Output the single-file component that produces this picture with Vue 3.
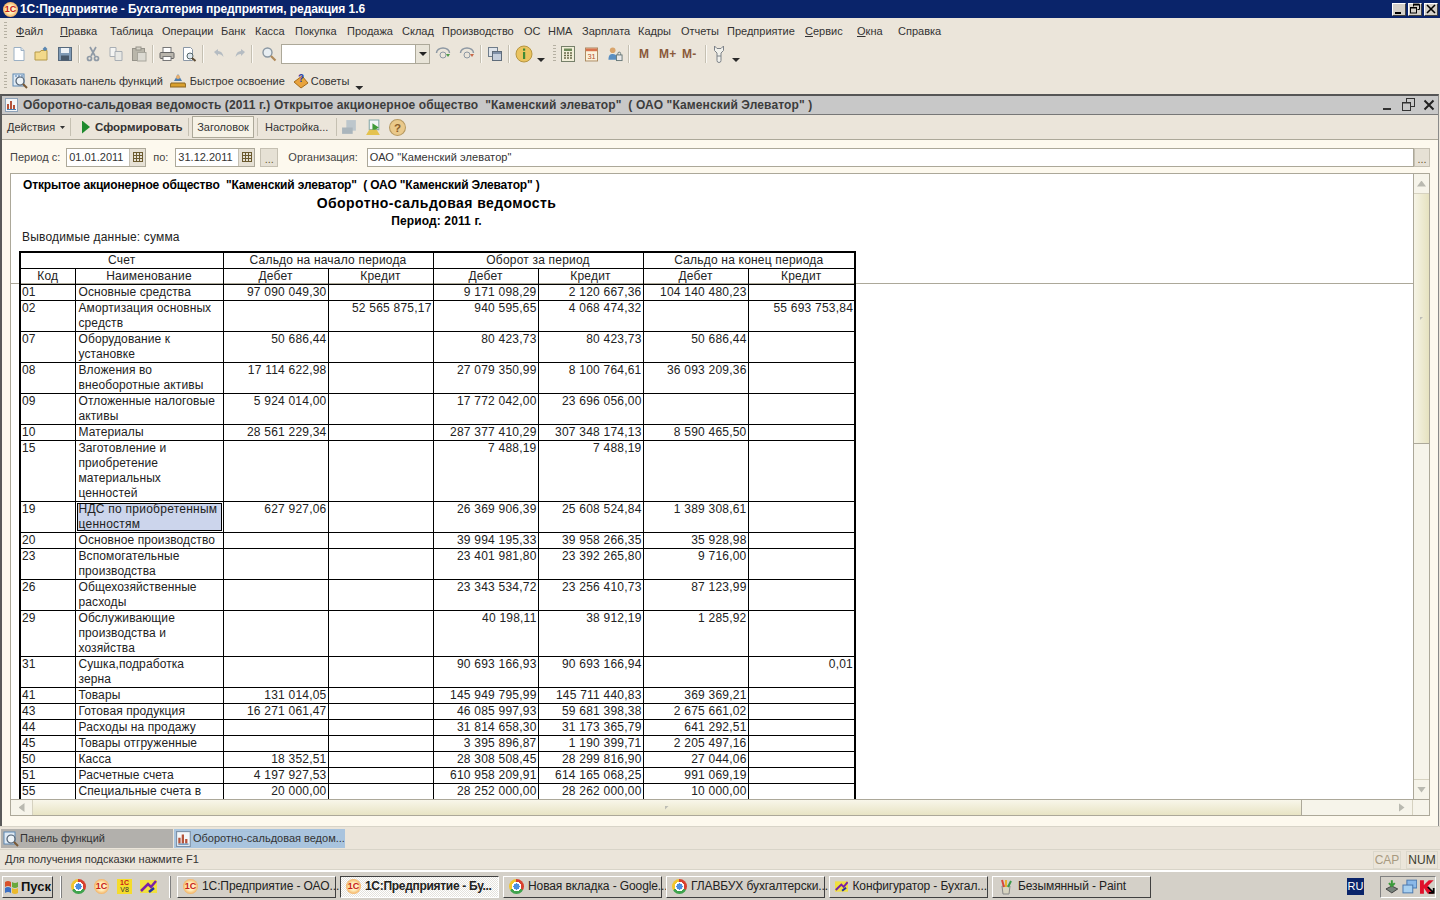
<template>
  <div class="app">
    <!-- заголовок приложения -->
    <div class="titlebar">
      <span class="one-c">1С</span>
      <span class="title-text">1С:Предприятие - Бухгалтерия предприятия, редакция 1.6</span>
      <div class="win-btns">
        <button class="win-btn"><svg width="12" height="12"><rect x="2" y="9" width="6" height="2" fill="#000"/></svg></button>
        <button class="win-btn"><svg width="12" height="12" fill="none" stroke="#000"><path d="M4.5 3.5V1.500h6v5h-2"/><path d="M4 1.500h6.500" stroke-width="2"/><rect x="1.500" y="4.500" width="6" height="5.500"/><path d="M1 5h7"/></svg></button>
        <button class="win-btn"><svg width="12" height="12" stroke="#000" stroke-width="1.600"><path d="M2 2l8 8M10 2l-8 8"/></svg></button>
      </div>
    </div>

    <!-- главное меню -->
    <div class="menubar">
      <span class="grip"></span>
      <div class="menu-items">
        <span v-for="m in menu" :key="m.name" class="menu-item" :style="{ width: m.w + 'px' }"><u>{{ m.name[0] }}</u>{{ m.name.slice(1) }}</span>
      </div>
    </div>

    <!-- панель 1 -->
    <div class="toolbar tb1">
      <span class="grip"></span>
      <svg class="ic first" viewBox="0 0 16 16"><path d="M3 1.500h7l3 3v10H3z" fill="#fff" stroke="#9bb0c4"/><path d="M10 1.500v3h3" fill="#dde6ee" stroke="#9bb0c4"/></svg>
      <svg class="ic" viewBox="0 0 16 16"><path d="M1 6h5l1-1.500h6V14H1z" fill="#f3d98a" stroke="#b59a4a"/><path d="M11 5V1.500M9 3.500l2-2 2 2" fill="none" stroke="#5a86b0" stroke-width="1.300"/></svg>
      <svg class="ic" viewBox="0 0 16 16"><rect x="1.500" y="1.500" width="13" height="13" fill="#7f9ab5" stroke="#56697c"/><rect x="4" y="2" width="8" height="5" fill="#eef2f5"/><rect x="4" y="9.500" width="8" height="5" fill="#48596a"/></svg>
      <span class="sep"></span>
      <svg class="ic" viewBox="0 0 16 16" stroke="#8f9aa6" fill="none" stroke-width="1.700"><path d="M5 1l5 9M11 1L6 10"/><circle cx="4.500" cy="12.500" r="2"/><circle cx="11.500" cy="12.500" r="2"/></svg>
      <svg class="ic" viewBox="0 0 16 16"><path d="M2 1.500h6v9H2z" fill="#f4f4f2" stroke="#a8aeb4"/><path d="M7 5.500h7v9H7z" fill="#e8e8e4" stroke="#a8aeb4"/></svg>
      <svg class="ic" viewBox="0 0 16 16"><rect x="1.500" y="2.500" width="12" height="12" fill="#b9b6aa" stroke="#96938a"/><rect x="5" y="1" width="5" height="3" fill="#d6d3c8" stroke="#96938a"/><rect x="6.500" y="6.500" width="8.500" height="8.500" fill="#dcdad2" stroke="#a8a69c"/></svg>
      <span class="sep"></span>
      <svg class="ic" viewBox="0 0 16 16"><rect x="4" y="1.500" width="8" height="5" fill="#fff" stroke="#777"/><rect x="1" y="6.500" width="14" height="6" rx="1" fill="#b9b5ac" stroke="#666"/><rect x="4" y="10.500" width="8" height="4" fill="#fff" stroke="#777"/></svg>
      <svg class="ic g6" viewBox="0 0 16 16"><path d="M2.500 1.500h7l2 2v11h-9z" fill="#fff" stroke="#8a97a6"/><circle cx="9" cy="10" r="3" fill="#dfe8f0" stroke="#566"/><path d="M11 12l3.500 3" stroke="#5c4a32" stroke-width="2"/></svg>
      <span class="sep"></span>
      <svg class="ic s12 undo" viewBox="0 0 12 12"><path d="M1 4l4-3v2c3 0 5 2 5.500 6-1.500-2-3-3-5.500-3v2z" fill="#b5bcc2"/></svg>
      <svg class="ic s12 redo" viewBox="0 0 12 12"><path d="M11 4L7 1v2C4 3 2 5 1.500 9 3 7 4.500 6 7 6v2z" fill="#b5bcc2"/></svg>
      <span class="sep"></span>
      <svg class="ic search" viewBox="0 0 16 16"><circle cx="6.500" cy="6.500" r="4.500" fill="#e8eef2" stroke="#8a97a2" stroke-width="1.400"/><path d="M10 10l4.500 4.500" stroke="#b08a5a" stroke-width="2.200"/></svg>
      <div class="combo"><span class="combo-input"></span><span class="combo-btn"><i class="arrow"></i></span></div>
      <svg class="ic" viewBox="0 0 16 16" fill="none"><path d="M1.500 7a6.500 5 0 0 1 13 0" stroke="#8d98a3" stroke-width="1.500"/><circle cx="8" cy="9" r="3" stroke="#8d98a3"/><path d="M11 8l2 3 2-3" fill="#4f9a4a"/></svg>
      <svg class="ic g8" viewBox="0 0 16 16" fill="none"><path d="M1.500 7a6.500 5 0 0 1 13 0" stroke="#8d98a3" stroke-width="1.500"/><circle cx="8" cy="9" r="3" stroke="#8d98a3"/><path d="M11 8l2 3 2-3" fill="#c76a4a"/></svg>
      <span class="sep"></span>
      <svg class="ic" viewBox="0 0 16 16"><rect x="1.500" y="1.500" width="9" height="9" fill="#dfe4ea" stroke="#6f7c8a"/><rect x="5.500" y="5.500" width="9" height="9" fill="#c6cfdc" stroke="#5f6c7a"/><rect x="6" y="6" width="8" height="2" fill="#7f90a8"/></svg>
      <span class="sep"></span>
      <svg class="ic s18" viewBox="0 0 18 18"><circle cx="9" cy="9" r="8" fill="#eac35e" stroke="#b79640"/><rect x="8" y="3.500" width="2.200" height="2.200" fill="#3e8a35"/><rect x="8" y="7" width="2.200" height="7" fill="#3e8a35"/></svg>
      <i class="drop"></i>
      <span class="grip g2"></span>
      <svg class="ic s14" viewBox="0 0 14 16"><rect x="0.500" y="0.500" width="13" height="15" fill="#f1eed8" stroke="#76806a"/><rect x="3" y="2.500" width="8" height="2.500" fill="#6e8a5a"/><path d="M3 7h2M6 7h2M9 7h2M3 9.500h2M6 9.500h2M9 9.500h2M3 12h2M6 12h2M9 12h2" stroke="#6b6b4a" stroke-width="1.300"/></svg>
      <svg class="ic cal" viewBox="0 0 14 16"><rect x="0.500" y="1.500" width="13" height="14" fill="#fbf2dc" stroke="#a8865c"/><rect x="1" y="2" width="12" height="3" fill="#d8744e"/><text x="7" y="13.500" text-anchor="middle" font-size="8" fill="#b5502e" font-family="Liberation Sans">31</text></svg>
      <svg class="ic s15" viewBox="0 0 16 16"><circle cx="5" cy="4" r="3" fill="#d9a56c"/><path d="M0.500 14c0-5 2-6 4.500-6s4 1 4 3v3z" fill="#5a8fc2"/><rect x="9" y="9" width="6" height="6" fill="#e8e8e8" stroke="#677"/><path d="M10.500 9V7.500a1.500 1.500 0 0 1 3 0V9" fill="none" stroke="#677"/></svg>
      <span class="sep"></span>
      <b class="mem m1">M</b>
      <b class="mem m2">M+</b>
      <b class="mem m3">M-</b>
      <span class="sep s-mem"></span>
      <svg class="ic wrench" viewBox="0 0 12 18" fill="#f1f1ec" stroke="#7d8288"><path d="M1.500 1v4.500L4 8v7.500a2 2 0 0 0 4 0V8l2.500-2.500V1L8 3.500H4z"/><path d="M4 11h4"/></svg>
      <i class="drop drop-last"></i>
    </div>

    <!-- панель 2 -->
    <div class="toolbar tb2">
      <span class="grip"></span>
      <svg class="ic first2" viewBox="0 0 16 16"><rect x="1" y="1" width="11" height="12" fill="#dfeaf4" stroke="#5f8ab4"/><path d="M3 3h2M6 3h2M9 3h2" stroke="#4a76a8"/><circle cx="8" cy="8" r="4" fill="#eef4f8" stroke="#4f5f70" stroke-width="1.200"/><path d="M11 11l4 4" stroke="#7a5a36" stroke-width="2"/></svg>
      <span class="tb-label">Показать панель функций</span>
      <svg class="ic t2" viewBox="0 0 16 16"><path d="M8 1l4 7H4z" fill="#4f7fb0"/><circle cx="8" cy="4" r="2" fill="#e8b070"/><path d="M1 10h14l1 4H0z" fill="#d9a02e" stroke="#8a6420"/></svg>
      <span class="tb-label">Быстрое освоение</span>
      <svg class="ic t3" viewBox="0 0 16 16"><path d="M1 9l8-6 6 7-7 5z" fill="#e8a33d" stroke="#a56c1c"/><text x="8" y="9" text-anchor="middle" font-size="10" font-weight="700" fill="#2a3fa8" font-family="Liberation Sans">?</text></svg>
      <span class="tb-label">Советы</span>
      <i class="drop d3"></i>
    </div>

    <!-- окно отчета -->
    <div class="doc">
      <div class="doc-title">
        <svg class="doc-ic" width="14" height="14" viewBox="0 0 14 14"><rect x="0.500" y="0.500" width="12" height="13" fill="#f4f6f8" stroke="#8fa3b8"/><path d="M3 11V6M6 11V3M9 11V7" stroke-width="2" stroke="#b5533a"/><path d="M2 11.500h9" stroke="#4a7db0"/></svg>
        <span class="doc-title-text">{{ docTitle }}</span>
        <div class="doc-btns">
          <svg width="14" height="14"><rect x="2" y="10" width="8" height="2" fill="#333"/></svg>
          <svg width="14" height="14" fill="none" stroke="#333"><rect x="4.500" y="0.500" width="8" height="8"/><rect x="0.500" y="4.500" width="8" height="8" fill="#c8c8c8"/><path d="M1 5h7"/></svg>
          <svg width="12" height="12" stroke="#222" stroke-width="2"><path d="M1.500 1.500l9 9M10.500 1.500l-9 9"/></svg>
        </div>
      </div>

      <div class="doc-toolbar">
        <span class="dt-act">Действия</span><i class="mini-arrow"></i>
        <span class="dt-sep"></span>
        <i class="play"></i>
        <b class="dt-run">Сформировать</b>
        <span class="dt-sep"></span>
        <span class="dt-pressed">Заголовок</span>
        <span class="dt-sep"></span>
        <span class="dt-set">Настройка...</span>
        <span class="dt-sep"></span>
        <svg class="dt-ic dt-first" viewBox="0 0 16 16"><path d="M5 1h9v10H5z" fill="#bcc6cc"/><path d="M1 8h10v6H1z" fill="#aab5bc"/></svg>
        <svg class="dt-ic" viewBox="0 0 16 16"><path d="M4 1h9v9H4z" fill="#f2f4f6" stroke="#8aa"/><path d="M7 4l6 4-6 4z" fill="#3f9a3a"/><path d="M1 15l3-5h7l3 5z" fill="#e4c24e"/></svg>
        <svg class="dt-ic" viewBox="0 0 16 16"><circle cx="8" cy="8" r="7.500" fill="#eac98a" stroke="#b79a62"/><text x="8" y="12" text-anchor="middle" font-size="11" font-weight="700" fill="#8a5f2a" font-family="Liberation Sans">?</text></svg>
      </div>

      <div class="filter">
        <label>Период с:</label>
        <div class="date date-from"><span>01.01.2011</span><i class="cal-btn"><svg width="10" height="10" viewBox="0 0 10 10"><path d="M0 .5h10M0 3.500h10M0 6.500h10M0 9.500h10M.5 0v10M3.500 0v10M6.500 0v10M9.500 0v10" stroke="#6b5a2e"/></svg></i></div>
        <label class="lbl-to">по:</label>
        <div class="date date-to"><span>31.12.2011</span><i class="cal-btn"><svg width="10" height="10" viewBox="0 0 10 10"><path d="M0 .5h10M0 3.500h10M0 6.500h10M0 9.500h10M.5 0v10M3.500 0v10M6.500 0v10M9.500 0v10" stroke="#6b5a2e"/></svg></i></div>
        <span class="dots-btn">...</span>
        <label class="lbl-org">Организация:</label>
        <div class="org"><span>ОАО "Каменский элеватор"</span></div>
        <span class="dots-btn org-btn">...</span>
      </div>

      <div class="report">
        <div class="report-main">
          <div class="sheet">
            <div class="freeze-line"></div>
            <div class="h-org">{{ orgTitle }}</div>
            <div class="h-title">Оборотно-сальдовая ведомость</div>
            <div class="h-period">Период: 2011 г.</div>
            <div class="h-note">Выводимые данные: сумма</div>
            <table class="osv">
              <colgroup><col v-for="(w, i) in cols" :key="i" :style="{ width: w + 'px' }" /></colgroup>
              <thead>
                <tr>
                  <th colspan="2">Счет</th>
                  <th colspan="2">Сальдо на начало периода</th>
                  <th colspan="2">Оборот за период</th>
                  <th colspan="2">Сальдо на конец периода</th>
                </tr>
                <tr>
                  <th>Код</th><th>Наименование</th>
                  <th>Дебет</th><th>Кредит</th>
                  <th>Дебет</th><th>Кредит</th>
                  <th>Дебет</th><th>Кредит</th>
                </tr>
              </thead>
              <tbody>
                <tr v-for="r in rows" :key="r[0]">
                  <td class="code">{{ r[0] }}</td>
                  <td class="name" :class="{ selected: r[0] === '19' }">{{ r[1] }}</td>
                  <td v-for="(v, i) in r.slice(2)" :key="i" class="num">{{ v }}</td>
                </tr>
              </tbody>
            </table>
          </div>
          <div class="vscroll">
            <span class="sb-btn v"><i class="tri up"></i></span>
            <span class="v-thumb"><i class="dot"></i></span>
            <span class="v-rest"></span>
            <span class="sb-btn v"><i class="tri down"></i></span>
          </div>
        </div>
        <div class="hscroll">
          <span class="sb-btn h"><i class="tri left"></i></span>
          <span class="h-thumb"><i class="dot"></i></span>
          <span class="h-rest"></span>
          <span class="sb-btn h"><i class="tri right"></i></span>
          <span class="corner"></span>
        </div>
      </div>
    </div>

    <!-- вкладки окон -->
    <div class="tabs">
      <div class="tab">
        <svg class="ic" viewBox="0 0 16 16"><rect x="1" y="1" width="11" height="12" fill="#dfeaf4" stroke="#5f8ab4"/><circle cx="8" cy="8" r="4" fill="#eef4f8" stroke="#4f5f70" stroke-width="1.200"/><path d="M11 11l4 4" stroke="#7a5a36" stroke-width="2"/></svg>
        <span>Панель функций</span>
      </div>
      <div class="tab active">
        <svg class="ic" viewBox="0 0 14 14"><rect x="0.500" y="0.500" width="12" height="13" fill="#f4f6f8" stroke="#7f93a8"/><path d="M3 11V6M6 11V3M9 11V7" stroke-width="2" stroke="#b5533a"/><path d="M2 11.500h9" stroke="#4a7db0"/></svg>
        <span>Оборотно-сальдовая ведом...</span>
      </div>
    </div>

    <!-- строка состояния -->
    <div class="status">
      <span class="status-text">Для получения подсказки нажмите F1</span>
      <span class="ind cap">CAP</span>
      <span class="ind num-ind">NUM</span>
    </div>

    <!-- панель задач -->
    <div class="taskbar">
      <button class="start">
        <svg width="15" height="15" viewBox="0 0 15 15"><path d="M1 3q3-2 6 0v5q-3-2-6 0z" fill="#d8512a"/><path d="M8 3q3 2 6 0v5q-3 2-6 0z" fill="#6aa83c"/><path d="M1 9q3-2 6 0v5q-3-2-6 0z" fill="#3b6fc4"/><path d="M8 9q3 2 6 0v5q-3 2-6 0z" fill="#eab92c"/></svg>
        <b>Пуск</b>
      </button>
      <span class="task-grip"></span>
      <div class="quick">
        <i class="chrome"></i>
        <span class="one-c">1С</span>
        <span class="v8">1С<em>V8</em></span>
        <svg width="17" height="15" viewBox="0 0 17 15"><rect y="1" width="17" height="13" fill="#f0e040"/><path d="M1 12L8 5l3 3 5-6" stroke="#7a1fa8" stroke-width="2.500" fill="none"/><path d="M9 13l5-4" stroke="#1f2fa8" stroke-width="2.500"/></svg>
      </div>
      <span class="task-grip"></span>
      <div class="tasks">
        <button class="task"><span class="one-c">1С</span><span class="task-text">1С:Предприятие - ОАО...</span></button>
        <button class="task on"><span class="one-c">1С</span><span class="task-text">1С:Предприятие - Бу...</span></button>
        <button class="task"><i class="chrome"></i><span class="task-text">Новая вкладка - Google...</span></button>
        <button class="task"><i class="chrome"></i><span class="task-text">ГЛАВБУХ бухгалтерски...</span></button>
        <button class="task"><svg width="17" height="15" viewBox="0 0 17 15"><rect y="1" width="17" height="13" fill="#f0e040"/><path d="M1 12L8 5l3 3 5-6" stroke="#7a1fa8" stroke-width="2.500" fill="none"/><path d="M9 13l5-4" stroke="#1f2fa8" stroke-width="2.500"/></svg><span class="task-text">Конфигуратор - Бухгал...</span></button>
        <button class="task"><svg width="16" height="16" viewBox="0 0 16 16"><path d="M4 7h8l-1 8H5z" fill="#d8d4c0" stroke="#888"/><path d="M6 8L4 1" stroke="#d8483a" stroke-width="2"/><path d="M8 8V1" stroke="#e8b030" stroke-width="2"/><path d="M10 8l3-6" stroke="#3a9a4a" stroke-width="2"/></svg><span class="task-text">Безымянный - Paint</span></button>
      </div>
      <span class="lang">RU</span>
      <div class="tray">
        <svg width="16" height="16" viewBox="0 0 16 16"><path d="M2 10l6-3 6 3-6 4z" fill="#77827a" stroke="#444"/><path d="M8 1v6M5 4l3 3 3-3" stroke="#3a9a3a" stroke-width="2" fill="none"/></svg>
        <svg width="16" height="16" viewBox="0 0 16 16"><rect x="5" y="1" width="10" height="8" fill="#8ab8e8" stroke="#4a78b0"/><rect x="1" y="6" width="10" height="8" fill="#a8d0f0" stroke="#4a78b0"/></svg>
        <svg width="16" height="16" viewBox="0 0 16 16"><path d="M1 1h4v5l5-5h5l-6 6 6 8H9L5 9v6H1z" fill="#e0102a"/><path d="M9 8l6 6M10 14h5V9" stroke="#000" stroke-width="1.800" fill="none"/></svg>
      </div>
    </div>
  </div>
</template>

<script setup>
// двойные пробелы как в оригинале, поэтому строки вынесены сюда
const orgTitle = 'Открытое акционерное общество  "Каменский элеватор"  ( ОАО "Каменский Элеватор" )'
const docTitle = 'Оборотно-сальдовая ведомость (2011 г.) ' + orgTitle

// ширины пунктов меню подобраны по скриншоту
const menu = [
  { name: 'Файл', w: 44 }, { name: 'Правка', w: 50 }, { name: 'Таблица', w: 52 },
  { name: 'Операции', w: 59 }, { name: 'Банк', w: 34 }, { name: 'Касса', w: 40 },
  { name: 'Покупка', w: 52 }, { name: 'Продажа', w: 55 }, { name: 'Склад', w: 40 },
  { name: 'Производство', w: 82 }, { name: 'ОС', w: 24 }, { name: 'НМА', w: 34 },
  { name: 'Зарплата', w: 56 }, { name: 'Кадры', w: 43 }, { name: 'Отчеты', w: 46 },
  { name: 'Предприятие', w: 78 }, { name: 'Сервис', w: 52 }, { name: 'Окна', w: 41 },
  { name: 'Справка', w: 50 }
]

const cols = [55, 148, 105, 105, 105, 105, 105, 107]

const rows = [
  ['01', 'Основные средства', '97 090 049,30', '', '9 171 098,29', '2 120 667,36', '104 140 480,23', ''],
  ['02', 'Амортизация основных\nсредств', '', '52 565 875,17', '940 595,65', '4 068 474,32', '', '55 693 753,84'],
  ['07', 'Оборудование к\nустановке', '50 686,44', '', '80 423,73', '80 423,73', '50 686,44', ''],
  ['08', 'Вложения во\nвнеоборотные активы', '17 114 622,98', '', '27 079 350,99', '8 100 764,61', '36 093 209,36', ''],
  ['09', 'Отложенные налоговые\nактивы', '5 924 014,00', '', '17 772 042,00', '23 696 056,00', '', ''],
  ['10', 'Материалы', '28 561 229,34', '', '287 377 410,29', '307 348 174,13', '8 590 465,50', ''],
  ['15', 'Заготовление и\nприобретение\nматериальных\nценностей', '', '', '7 488,19', '7 488,19', '', ''],
  ['19', 'НДС по приобретенным\nценностям', '627 927,06', '', '26 369 906,39', '25 608 524,84', '1 389 308,61', ''],
  ['20', 'Основное производство', '', '', '39 994 195,33', '39 958 266,35', '35 928,98', ''],
  ['23', 'Вспомогательные\nпроизводства', '', '', '23 401 981,80', '23 392 265,80', '9 716,00', ''],
  ['26', 'Общехозяйственные\nрасходы', '', '', '23 343 534,72', '23 256 410,73', '87 123,99', ''],
  ['29', 'Обслуживающие\nпроизводства и\nхозяйства', '', '', '40 198,11', '38 912,19', '1 285,92', ''],
  ['31', 'Сушка,подработка\nзерна', '', '', '90 693 166,93', '90 693 166,94', '', '0,01'],
  ['41', 'Товары', '131 014,05', '', '145 949 795,99', '145 711 440,83', '369 369,21', ''],
  ['43', 'Готовая продукция', '16 271 061,47', '', '46 085 997,93', '59 681 398,38', '2 675 661,02', ''],
  ['44', 'Расходы на продажу', '', '', '31 814 658,30', '31 173 365,79', '641 292,51', ''],
  ['45', 'Товары отгруженные', '', '', '3 395 896,87', '1 190 399,71', '2 205 497,16', ''],
  ['50', 'Касса', '18 352,51', '', '28 308 508,45', '28 299 816,90', '27 044,06', ''],
  ['51', 'Расчетные счета', '4 197 927,53', '', '610 958 209,91', '614 165 068,25', '991 069,19', ''],
  ['55', 'Специальные счета в', '20 000,00', '', '28 252 000,00', '28 262 000,00', '10 000,00', '']
]
</script>

<style>
html, body {
  margin: 0;
  overflow: hidden;
}
</style>

<style scoped>
.app {
  width: 1440px;
  height: 900px;
  display: flex;
  flex-direction: column;
  overflow: hidden;
  background: #ebe5da;
  color: #2a2a2a;
  font: 11px/15px "Liberation Sans", Arial, sans-serif;
}

button {
  font: inherit;
  color: inherit;
  padding: 0;
}

i {
  display: block;
  font-style: normal;
}

.one-c {
  width: 15px;
  height: 15px;
  flex: none;
  border-radius: 50%;
  background: radial-gradient(circle, #fff0c0 35%, #ee9030 90%);
  color: #c8201a;
  font: 700 9px/15px "Liberation Sans", sans-serif;
  letter-spacing: 0;
  text-align: center;
}

.titlebar {
  height: 18px;
  flex: none;
  display: flex;
  align-items: center;
  padding-left: 3px;
  background: #0a246a;
}
.title-text {
  margin-left: 2px;
  color: #fff;
  font-weight: 700;
  font-size: 12px;
  letter-spacing: -0.07px;
}
.win-btns {
  margin-left: auto;
  margin-right: 2px;
  display: flex;
  gap: 2px;
}
.win-btn {
  width: 14px;
  height: 13px;
  display: flex;
  align-items: center;
  justify-content: center;
  background: #d4d0c8;
  border: 1px solid;
  border-color: #fff #404040 #404040 #fff;
}

.grip {
  width: 3px;
  height: 18px;
  flex: none;
  margin-left: 4px;
  background: repeating-linear-gradient(#b5b0a2 0 1px, transparent 1px 3px);
}

.menubar {
  height: 26px;
  flex: none;
  display: flex;
  align-items: center;
  color: #333;
}
.menu-items {
  display: flex;
  margin-left: 9px;
}
.menu-item {
  flex: none;
  white-space: nowrap;
}
.menu-item u {
  text-decoration: none;
}
.menu-item:nth-of-type(1) u,
.menu-item:nth-of-type(2) u,
.menu-item:nth-of-type(17) u,
.menu-item:nth-of-type(18) u {
  text-decoration: underline;
}

.toolbar {
  flex: none;
  display: flex;
  align-items: center;
}
.tb1 {
  height: 24px;
  box-sizing: border-box;
  padding-bottom: 4px;
  gap: 7px;
}
.tb2 {
  height: 26px;
}
.ic {
  width: 16px;
  height: 16px;
  flex: none;
  display: block;
}
.first {
  margin-left: -3px;
}
.first2 {
  margin-left: 5px;
}
.s12 {
  width: 12px;
  height: 12px;
}
.undo {
  margin-left: 4px;
}
.redo {
  margin-left: 2px;
}
.search {
  margin-left: 3px;
}
.s14 {
  width: 14px;
  margin-left: -2px;
}
.s15 {
  width: 15px;
  margin-left: 3px;
}
.s18 {
  width: 18px;
  height: 18px;
}
.cal {
  width: 13px;
  margin-left: 3px;
}
.g6 {
  margin-left: -1px;
}
.g8 {
  margin-left: 1px;
}
.sep {
  width: 1px;
  height: 18px;
  flex: none;
  margin: 0 -2px;
  background: #c5c0b2;
  border-right: 1px solid #fbf9f4;
}
.combo {
  width: 149px;
  height: 20px;
  flex: none;
  display: flex;
  margin-left: -3px;
  margin-right: -2px;
  border: 1px solid #aca899;
  box-sizing: border-box;
}
.combo-input {
  flex: 1;
  background: #fff;
}
.combo-btn {
  width: 13px;
  display: flex;
  align-items: center;
  justify-content: center;
  background: #e8e4d8;
  border-left: 1px solid #aca899;
}
.arrow {
  border: 4px solid transparent;
  border-top: 4px solid #222;
  border-bottom: 0;
}
.drop {
  width: 8px;
  height: 4px;
  margin-top: 12px;
  margin-left: -3px;
  background: #2a2a2a;
  clip-path: polygon(0 0, 100% 0, 50% 100%);
  flex: none;
}
.drop-last {
  margin-left: 0;
}
.g2 {
  margin-left: 1px;
}
.mem {
  flex: none;
  color: #8a5a3a;
  font-size: 12px;
  letter-spacing: 0.3px;
}
.m1 {
  margin-left: 4px;
  width: 10px;
}
.m2 {
  margin-left: 3px;
  width: 17px;
}
.m3 {
  margin-left: -1px;
  width: 17px;
}
.s-mem {
  margin-left: -1px;
}
.wrench {
  width: 12px;
  height: 18px;
  margin-left: 1px;
}
.tb-label {
  margin-left: 2px;
  color: #333;
  white-space: nowrap;
}
.t2 {
  margin-left: 7px;
  margin-right: 2px;
}
.t3 {
  margin-left: 8px;
}
.d3 {
  margin-left: 6px;
  margin-top: 14px;
}

.doc {
  height: 732px;
  flex: none;
  box-sizing: border-box;
  display: flex;
  flex-direction: column;
  margin-right: 1px;
  border-top: 2px solid #555;
  border-left: 2px solid #5a5a5a;
  border-right: 1px solid #8a8a8a;
  background: #fdf9ee;
}
.doc-title {
  height: 19px;
  flex: none;
  box-sizing: border-box;
  display: flex;
  align-items: center;
  padding-left: 3px;
  background: #c8c8c8;
  border-bottom: 1px solid #777;
}
.doc-ic {
  flex: none;
}
.doc-title-text {
  margin-left: 4px;
  color: #3c3c3c;
  font-weight: 700;
  font-size: 12px;
  letter-spacing: 0.12px;
  white-space: pre;
}
.doc-btns {
  margin-left: auto;
  margin-right: 3px;
  display: flex;
  align-items: center;
  gap: 7px;
}
.doc-toolbar {
  height: 25px;
  flex: none;
  box-sizing: border-box;
  display: flex;
  align-items: center;
  padding-left: 5px;
  background: #ebe5da;
  border-bottom: 1px solid #aca899;
  color: #333;
}
.dt-act {
  width: 53px;
}
.mini-arrow {
  width: 5px;
  height: 3px;
  margin-top: 1px;
  margin-right: 2px;
  background: #333;
  clip-path: polygon(0 0, 100% 0, 50% 100%);
}
.dt-sep {
  width: 1px;
  height: 18px;
  margin: 0 3px;
  flex: none;
  background: #c5c0b2;
}
.play {
  width: 8px;
  height: 13px;
  margin-left: 8px;
  background: #1f8a2e;
  clip-path: polygon(0 0, 100% 50%, 0 100%);
}
.dt-run {
  width: 90px;
  margin-left: 5px;
  font-size: 11.5px;
}
.dt-pressed {
  height: 22px;
  width: 62px;
  box-sizing: border-box;
  text-align: center;
  line-height: 20px;
  background: #f6f2e6;
  border: 1px solid #aca899;
}
.dt-set {
  width: 68px;
  margin-left: 4px;
}
.dt-ic {
  width: 17px;
  height: 17px;
  margin-left: 4px;
  margin-right: 3px;
  flex: none;
}
.dt-first {
  margin-left: 1px;
}

.filter {
  height: 33px;
  flex: none;
  box-sizing: border-box;
  display: flex;
  align-items: center;
  padding: 1px 8px 0;
  color: #444;
}
.filter label {
  flex: none;
}
.date {
  height: 19px;
  flex: none;
  box-sizing: border-box;
  display: flex;
  align-items: center;
  background: #fff;
  border: 1px solid #aca899;
  color: #333;
}
.date span {
  flex: 1;
  padding-left: 2px;
}
.date-from {
  width: 80px;
  margin-left: 6px;
}
.date-to {
  width: 80px;
  margin-left: 7px;
}
.cal-btn {
  width: 15px;
  height: 17px;
  display: flex;
  align-items: center;
  justify-content: center;
  background: #e6e1d5;
  border-left: 1px solid #c5c0b2;
}
.lbl-to {
  margin-left: 7px;
}
.dots-btn {
  width: 18px;
  height: 19px;
  flex: none;
  box-sizing: border-box;
  margin-left: 5px;
  text-align: center;
  line-height: 20px;
  background: #e6e1d5;
  border: 1px solid #c5c0b2;
  color: #6b5a2e;
}
.lbl-org {
  margin-left: 10px;
}
.org {
  flex: 1;
  height: 19px;
  margin-left: 9px;
  box-sizing: border-box;
  padding-left: 2px;
  background: #fff;
  border: 1px solid #aca899;
  color: #333;
  line-height: 17px;
  letter-spacing: 0.1px;
}
.org-btn {
  width: 16px;
  margin-left: 0;
}

.report {
  width: 1420px;
  height: 643px;
  flex: none;
  box-sizing: border-box;
  display: flex;
  flex-direction: column;
  margin-left: 8px;
  background: #fff;
  border: 1px solid #aca899;
}
.report-main {
  flex: 1;
  min-height: 0;
  display: flex;
}
.sheet {
  position: relative;
  flex: 1;
  min-width: 0;
  overflow: hidden;
  padding-left: 8px;
  color: #000;
  font-size: 12px;
}
.freeze-line {
  position: absolute;
  left: 0;
  right: 0;
  top: 109px;
  height: 1px;
  background: #aca899;
}
.h-org {
  margin-top: 4px;
  padding-left: 4px;
  font-weight: 700;
  font-size: 12px;
  letter-spacing: -0.15px;
  line-height: 15px;
  white-space: pre;
}
.h-title {
  width: 835px;
  margin-top: 2px;
  text-align: center;
  font-weight: 700;
  font-size: 14px;
  line-height: 16px;
  letter-spacing: 0.43px;
}
.h-period {
  width: 835px;
  margin-top: 3px;
  text-align: center;
  font-weight: 700;
  line-height: 15px;
  letter-spacing: 0.13px;
}
.h-note {
  margin-top: 1px;
  padding-left: 3px;
  color: #222;
  line-height: 15px;
  letter-spacing: 0.17px;
}

.osv {
  position: relative;
  width: 835px;
  margin-top: 6px;
  table-layout: fixed;
  border-collapse: collapse;
  border: 2px solid #000;
  border-bottom: 0;
  color: #222;
}
.osv th {
  height: 15px;
  padding: 0;
  border: 1px solid #000;
  font-weight: 400;
  line-height: 15px;
  text-align: center;
  letter-spacing: 0.2px;
}
.osv td {
  height: 15px;
  padding: 0 1px 0 3px;
  border: 1px solid #000;
  vertical-align: top;
  line-height: 15px;
  white-space: pre-line;
}
.osv .code {
  padding-left: 1px;
}
.osv .name {
  letter-spacing: 0.1px;
}
.osv .num {
  text-align: right;
  white-space: nowrap;
  letter-spacing: 0.22px;
}
.osv .selected {
  background: #ccd5ec;
  letter-spacing: 0.25px;
  box-shadow: inset 0 0 0 1px #fff, inset 0 0 0 2px #000;
}

.vscroll {
  width: 15px;
  flex: none;
  display: flex;
  flex-direction: column;
  border-left: 1px solid #aca899;
  background: #f6f4ea;
}
.sb-btn {
  display: flex;
  flex: none;
  align-items: center;
  justify-content: center;
  box-sizing: border-box;
  background: #f6f4ea;
}
.sb-btn.v {
  height: 20px;
}
.sb-btn.v:first-child {
  border-bottom: 1px solid #d6d2c0;
}
.sb-btn.v:last-child {
  border-top: 1px solid #d6d2c0;
}
.sb-btn.h {
  width: 21px;
}
.v-thumb {
  height: 250px;
  flex: none;
  display: flex;
  align-items: center;
  justify-content: center;
  box-sizing: border-box;
  background: linear-gradient(90deg, #f6f4e6, #e6e2c0);
  border-bottom: 1px solid #aca899;
}
.v-rest {
  flex: 1;
}
.dot {
  width: 4px;
  height: 4px;
  background: #bdbdb5;
  clip-path: polygon(0 0, 100% 0, 0 100%);
}
.tri {
  width: 9px;
  height: 6px;
  background: #b9b9b0;
}
.up {
  clip-path: polygon(50% 0, 100% 100%, 0 100%);
}
.down {
  clip-path: polygon(0 0, 100% 0, 50% 100%);
}
.left {
  width: 6px;
  height: 9px;
  clip-path: polygon(0 50%, 100% 0, 100% 100%);
}
.right {
  width: 6px;
  height: 9px;
  clip-path: polygon(0 0, 100% 50%, 0 100%);
}
.hscroll {
  height: 16px;
  flex: none;
  display: flex;
  box-sizing: border-box;
  border-top: 1px solid #aca899;
  background: #f6f4ea;
}
.h-thumb {
  width: 1270px;
  flex: none;
  display: flex;
  align-items: center;
  justify-content: center;
  background: linear-gradient(#f8f6ea, #e8e4c4);
  border-left: 1px solid #d6d2c0;
  border-right: 1px solid #aca899;
  box-sizing: border-box;
}
.h-rest {
  flex: 1;
}
.corner {
  width: 16px;
  flex: none;
  border-left: 1px solid #d6d2c0;
}

.tabs {
  height: 23px;
  flex: none;
  box-sizing: border-box;
  display: flex;
  gap: 1px;
  padding: 2px 0 1px 1px;
  border-top: 1px solid #d8d4c8;
}
.tab {
  width: 172px;
  display: flex;
  align-items: center;
  gap: 1px;
  padding-left: 2px;
  box-sizing: border-box;
  background: #b2b0ac;
  color: #333;
  white-space: nowrap;
}
.tab.active {
  width: 171px;
  background: #a9c4de;
}

.status {
  height: 21px;
  flex: none;
  box-sizing: border-box;
  display: flex;
  align-items: center;
  padding: 0 2px 0 5px;
  border-top: 1px solid #d8d4c8;
  border-bottom: 1px solid #d8d4c8;
  color: #333;
}
.status-text {
  flex: 1;
}
.ind {
  height: 18px;
  box-sizing: border-box;
  text-align: center;
  line-height: 16px;
  border: 1px solid #dcd8cc;
  font-size: 12px;
}
.cap {
  width: 28px;
  margin-right: 5px;
  color: #a89a80;
}
.num-ind {
  width: 32px;
  color: #3a3a2a;
}

.taskbar {
  height: 30px;
  flex: none;
  box-sizing: border-box;
  display: flex;
  align-items: center;
  padding: 1px 0 0 2px;
  background: #d4d0c8;
  border-top: 2px solid #fff;
  color: #222;
  font-size: 12px;
}
.start {
  width: 51px;
  height: 22px;
  flex: none;
  display: flex;
  align-items: center;
  justify-content: center;
  gap: 2px;
  background: #d4d0c8;
  border: 1px solid;
  border-color: #fff #404040 #404040 #fff;
  font-size: 13px;
  color: #111;
}
.task-grip {
  width: 1px;
  height: 22px;
  flex: none;
  margin-left: 7px;
  background: #fff;
  border-right: 1px solid #808080;
}
.quick {
  width: 100px;
  flex: none;
  display: flex;
  align-items: center;
  gap: 8px;
  padding-left: 9px;
  box-sizing: border-box;
}
.chrome {
  width: 15px;
  height: 15px;
  flex: none;
  border-radius: 50%;
  background:
    radial-gradient(circle, #4a8fe0 0 3px, #fff 3.2px 4.5px, transparent 4.7px),
    conic-gradient(#d8402e 0 120deg, #3fa34d 120deg 240deg, #f2c62e 240deg);
}
.v8 {
  width: 15px;
  height: 15px;
  flex: none;
  background: #f5dc2c;
  color: #c8201a;
  font: 700 7px/7px "Liberation Sans", sans-serif;
  text-align: center;
}
.v8 em {
  display: block;
  font-style: normal;
  font-weight: 400;
  color: #333;
}
.tasks {
  display: flex;
  flex: none;
  gap: 4px;
  margin-left: 6px;
}
.task {
  width: 159px;
  height: 22px;
  flex: none;
  box-sizing: border-box;
  display: flex;
  align-items: center;
  gap: 4px;
  padding-left: 5px;
  background: #d4d0c8;
  border: 1px solid;
  border-color: #fff #404040 #404040 #fff;
  letter-spacing: -0.1px;
  white-space: nowrap;
}
.task.on {
  border-color: #404040 #fff #fff #404040;
  background: repeating-conic-gradient(#fff 0 25%, #e4e2dc 0 50%) 0 0 / 2px 2px;
  font-weight: 700;
  letter-spacing: -0.3px;
}
.lang {
  width: 17px;
  height: 17px;
  flex: none;
  margin-left: 196px;
  background: #0a246a;
  color: #fff;
  font-size: 11px;
  line-height: 17px;
  text-align: center;
}
.tray {
  width: 56px;
  height: 22px;
  flex: none;
  box-sizing: border-box;
  display: flex;
  align-items: center;
  gap: 2px;
  margin-left: 16px;
  padding-left: 3px;
  border: 1px solid;
  border-color: #808080 #fff #fff #808080;
}
</style>
